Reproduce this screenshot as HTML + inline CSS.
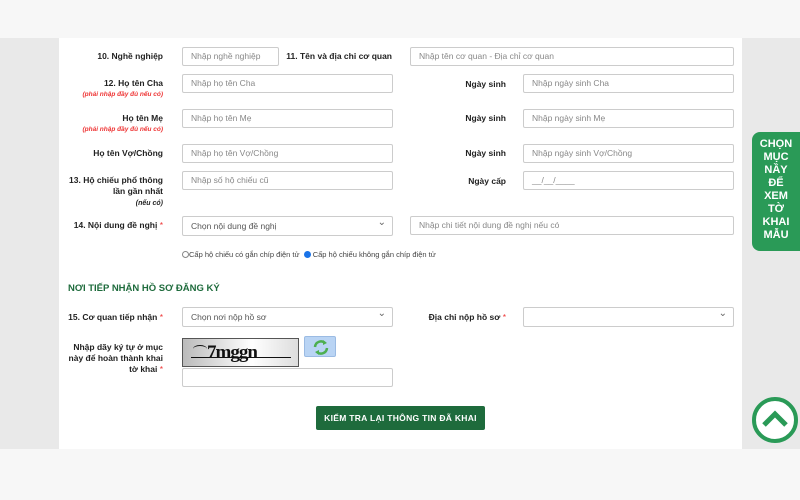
<!DOCTYPE html>
<html><head><meta charset="utf-8"><style>
*{box-sizing:border-box;margin:0;padding:0}
body{width:800px;height:500px;position:relative;background:#f7f7f7;font-family:"Liberation Sans",Arial,sans-serif;overflow:hidden}
.gray{position:absolute;left:0;top:38px;width:800px;height:411px;background:#e9e9e9}
.white{position:absolute;left:59px;top:38px;width:683px;height:411px;background:#fff}
.l{position:absolute;font-size:8.5px;font-weight:bold;color:#222;text-align:right;line-height:11px;white-space:nowrap}
.r{color:#e33;font-weight:normal}
.s{display:block;color:#e33;font-style:italic;font-size:6.5px;font-weight:bold}
.i{position:absolute;height:19px;border:1px solid #ccc;border-radius:2px;font-size:8.5px;color:#888;padding:0 8px;line-height:17px;background:#fff;white-space:nowrap;overflow:hidden}
.sel:after{content:"⌄";position:absolute;right:6px;top:-3px;font-size:10px;color:#666}
</style></head><body>
<div class="gray"></div><div class="white"></div>

<div class="l" style="right:637px;top:51px">10. Nghề nghiệp</div>
<div class="i" style="left:182px;top:47px;width:97px">Nhập nghề nghiệp</div>
<div class="l" style="right:408px;top:51px">11. Tên và địa chỉ cơ quan</div>
<div class="i" style="left:410px;top:47px;width:324px">Nhập tên cơ quan - Địa chỉ cơ quan</div>

<div class="l" style="right:637px;top:78px">12. Họ tên Cha<span class="s">(phải nhập đầy đủ nếu có)</span></div>
<div class="i" style="left:182px;top:74px;width:211px">Nhập họ tên Cha</div>
<div class="l" style="right:294px;top:79px">Ngày sinh</div>
<div class="i" style="left:523px;top:74px;width:211px">Nhập ngày sinh Cha</div>

<div class="l" style="right:637px;top:113px">Họ tên Mẹ<span class="s">(phải nhập đầy đủ nếu có)</span></div>
<div class="i" style="left:182px;top:109px;width:211px">Nhập họ tên Mẹ</div>
<div class="l" style="right:294px;top:113px">Ngày sinh</div>
<div class="i" style="left:523px;top:109px;width:211px">Nhập ngày sinh Mẹ</div>

<div class="l" style="right:637px;top:148px">Họ tên Vợ/Chồng</div>
<div class="i" style="left:182px;top:144px;width:211px">Nhập họ tên Vợ/Chồng</div>
<div class="l" style="right:294px;top:148px">Ngày sinh</div>
<div class="i" style="left:523px;top:144px;width:211px">Nhập ngày sinh Vợ/Chồng</div>

<div class="l" style="right:637px;top:175px">13. Hộ chiếu phổ thông<br>lần gần nhất<br><i style="font-size:7px">(nếu có)</i></div>
<div class="i" style="left:182px;top:171px;width:211px">Nhập số hộ chiếu cũ</div>
<div class="l" style="right:294px;top:176px">Ngày cấp</div>
<div class="i" style="left:523px;top:171px;width:211px">__/__/____</div>

<div class="l" style="right:637px;top:220px">14. Nội dung đề nghị <span class="r">*</span></div>
<div class="i sel" style="left:182px;top:216px;width:211px;height:20px;color:#555;line-height:18px">Chọn nội dung đề nghị</div>
<div class="i" style="left:410px;top:216px;width:324px">Nhập chi tiết nội dung đề nghị nếu có</div>

<div style="position:absolute;left:182px;top:250px;font-size:7.5px;color:#444;line-height:10px;white-space:nowrap">
<span style="display:inline-block;width:7px;height:7px;border:1px solid #888;border-radius:50%;vertical-align:-1px"></span>Cấp hộ chiếu có gắn chíp điện tử
<span style="display:inline-block;width:7px;height:7px;border:2px solid #1a73e8;background:#1a73e8;border-radius:50%;vertical-align:-1px;margin-left:2px"></span> Cấp hộ chiếu không gắn chíp điện tử</div>

<div style="position:absolute;left:68px;top:283px;font-size:9.5px;font-weight:bold;color:#1e6b3c">NƠI TIẾP NHẬN HỒ SƠ ĐĂNG KÝ</div>

<div class="l" style="right:637px;top:312px">15. Cơ quan tiếp nhận <span class="r">*</span></div>
<div class="i sel" style="left:182px;top:307px;width:211px;height:20px;color:#555;line-height:18px">Chọn nơi nộp hồ sơ</div>
<div class="l" style="right:294px;top:312px">Địa chỉ nộp hồ sơ <span class="r">*</span></div>
<div class="i sel" style="left:523px;top:307px;width:211px;height:20px"></div>

<div class="l" style="right:637px;top:342px">Nhập dãy ký tự ở mục<br>này để hoàn thành khai<br>tờ khai <span class="r">*</span></div>
<div style="position:absolute;left:182px;top:338px;width:117px;height:29px;border:1px solid #555;background:linear-gradient(90deg,#bbb,#fff 60%,#ddd);overflow:hidden">
<div style="position:absolute;left:24px;top:3px;font-family:'Liberation Serif',serif;font-size:19px;font-weight:bold;color:#111;letter-spacing:-1px">7mggn</div>
<div style="position:absolute;left:10px;top:6px;width:14px;height:8px;border-top:1.5px solid #111;border-radius:50% 50% 0 0"></div>
<div style="position:absolute;left:8px;top:18px;width:100px;height:1px;background:#111"></div></div>
<div style="position:absolute;left:304px;top:336px;width:32px;height:21px;background:#b9d4f4;border:1px solid #9bbbe3;border-radius:2px">
<svg width="32" height="21" viewBox="0 0 32 21"><path d="M10 10a6 6 0 0 1 10-4" stroke="#4caf50" stroke-width="2.5" fill="none"/><path d="M22 11a6 6 0 0 1-10 4" stroke="#4caf50" stroke-width="2.5" fill="none"/><path d="M18 3l4 3-4 2z M14 18l-4-3 4-2z" fill="#4caf50"/></svg></div>
<div class="i" style="left:182px;top:368px;width:211px"></div>

<div style="position:absolute;left:316px;top:406px;width:169px;height:24px;background:#1e6b3c;border-radius:2px;color:#fff;font-size:8.5px;font-weight:bold;text-align:center;line-height:24px;letter-spacing:0.3px">KIẾM TRA LẠI THÔNG TIN ĐÃ KHAI</div>

<div style="position:absolute;left:752px;top:132px;width:48px;height:119px;background:#2a9a57;border-radius:8px 0 0 8px;color:#fff;font-family:'Liberation Sans',sans-serif;font-weight:bold;font-size:11px;line-height:13px;text-align:center;padding-top:6px">CHỌN<br>MỤC<br>NẦY<br>ĐỂ<br>XEM<br>TỜ<br>KHAI<br>MẪU</div>

<svg style="position:absolute;left:751px;top:396px" width="48" height="48" viewBox="0 0 48 48"><circle cx="24" cy="24" r="21" fill="#fff" stroke="#2a9a57" stroke-width="4"/><path d="M13 29l11-11 11 11" stroke="#2a9a57" stroke-width="5" fill="none"/></svg>
</body></html>
